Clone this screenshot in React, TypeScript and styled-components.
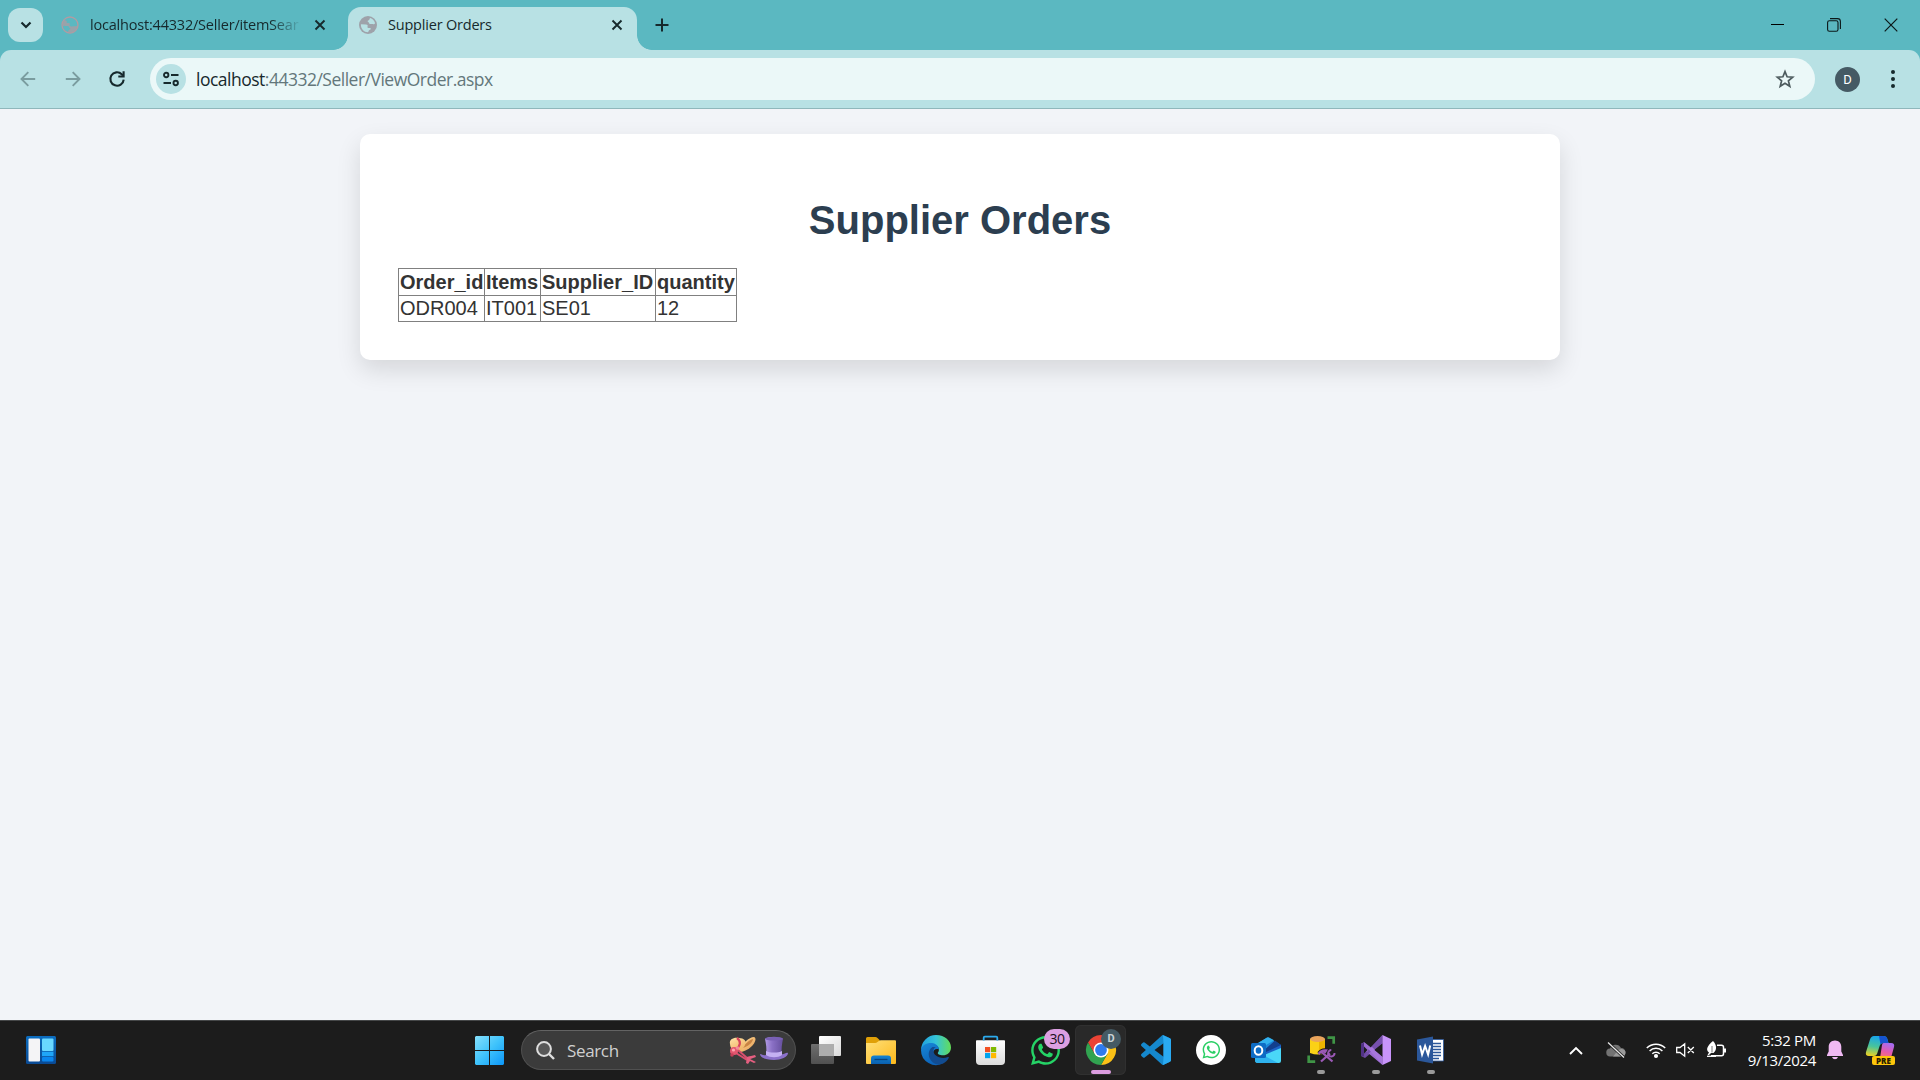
import React from "react";
import styled, { createGlobalStyle } from "styled-components";
import { FaWhatsapp } from "react-icons/fa";

const UI_FONT = `"Open Sans", "Noto Sans", sans-serif`;

const GlobalStyle = createGlobalStyle`
  * { box-sizing: border-box; }
  html, body { margin: 0; padding: 0; }
  body { width: 1920px; height: 1080px; overflow: hidden; background: #f2f4f8; }
  svg { display: block; overflow: visible; }
`;

const Desktop = styled.div`
  width: 1920px;
  height: 1080px;
  display: flex;
  flex-direction: column;
  font-family: ${UI_FONT};
`;

/* ---------- tab strip ---------- */
const TabStrip = styled.header`
  height: 50px;
  background: #5bb8c1;
  display: flex;
  align-items: flex-start;
  padding-left: 8px;
`;

const TabSearch = styled.button`
  width: 35px;
  height: 34px;
  margin-top: 8px;
  border: 0;
  padding: 0;
  border-radius: 12px;
  background: #b8e1e4;
  display: grid;
  place-items: center;
`;

const Tab = styled.div<{ $active?: boolean }>`
  position: relative;
  width: ${(p) => (p.$active ? 289 : 290)}px;
  height: ${(p) => (p.$active ? 43 : 36)}px;
  margin-top: 7px;
  margin-left: ${(p) => (p.$active ? 0 : 15)}px;
  padding: 0 0 ${(p) => (p.$active ? 7 : 0)}px ${(p) => (p.$active ? 11 : 3)}px;
  border-radius: 13px 13px 0 0;
  background: ${(p) => (p.$active ? "#b8e1e4" : "transparent")};
  display: flex;
  align-items: center;
`;

const TabFoot = styled.i<{ $side: "left" | "right" }>`
  position: absolute;
  bottom: 0;
  ${(p) => p.$side}: -15px;
  width: 15px;
  height: 15px;
  background: radial-gradient(
    circle at ${(p) => (p.$side === "left" ? "0 0" : "100% 0")},
    transparent 14.5px,
    #b8e1e4 15.2px
  );
`;

const TabTitle = styled.span<{ $fade?: boolean }>`
  width: ${(p) => (p.$fade ? 212 : 218)}px;
  flex: none;
  margin-left: 11px;
  white-space: nowrap;
  font-size: 14.5px;
  line-height: 22px;
  letter-spacing: ${(p) => (p.$fade ? "-0.2px" : "-0.2px")};
  color: #16292c;
  ${(p) => p.$fade && "mask-image: linear-gradient(90deg, #000 180px, transparent 212px);"}
`;

const TabClose = styled.span<{ $gap: number }>`
  margin-left: ${(p) => p.$gap}px;
`;

const NewTab = styled.div`
  margin: 18px 0 0 18px;
`;

const WindowControls = styled.div`
  margin-left: auto;
  height: 50px;
  padding: 0 22px 1px 0;
  display: flex;
  align-items: center;
  gap: 43px;
`;

/* ---------- toolbar ---------- */
const ToolbarBack = styled.div`
  background: #5bb8c1;
`;

const Toolbar = styled.div`
  height: 59px;
  border-radius: 11px 11px 0 0;
  border-bottom: 1px solid #8fb7bb;
  background: #b8e1e4;
  display: flex;
  align-items: center;
  padding: 0 20px 0 20px;
`;

const NavButtons = styled.div`
  width: 130px;
  display: flex;
  gap: 28.5px;
`;

const Omnibox = styled.div`
  width: 1665px;
  height: 42px;
  border-radius: 21px;
  background: #ebf8f8;
  display: flex;
  align-items: center;
  padding: 0 20px 0 6px;
`;

const SiteInfo = styled.span`
  width: 30px;
  height: 30px;
  border-radius: 50%;
  background: #b8e1e4;
  display: grid;
  place-items: center;
`;

const Url = styled.span`
  flex: 1;
  margin-left: 10px;
  font-size: 17.5px;
  line-height: 26px;
  letter-spacing: -0.5px;
  color: #63777b;
  b { font-weight: 400; color: #18292c; }
`;

const Avatar = styled.span`
  width: 25px;
  height: 25px;
  margin-left: 20px;
  border-radius: 50%;
  background: #455a64;
  color: #fff;
  font: 400 13px/25px Roboto, sans-serif;
  text-align: center;
`;

const Kebab = styled.span`
  margin-left: auto;
  margin-right: 4px;
`;

/* ---------- page ---------- */
const Page = styled.main`
  flex: 1;
  background: #f2f4f8;
  padding-top: 25px;
  font-family: "Liberation Sans", Arial, sans-serif;
  color: #333;
`;

const Card = styled.section`
  width: 1200px;
  height: 226px;
  margin: 0 auto;
  padding: 59px 38px 0;
  border-radius: 10px;
  background: #fff;
  box-shadow: 0 10px 25px rgba(0, 0, 0, 0.12);
`;

const Title = styled.h1`
  margin: 0 0 20px;
  height: 55px;
  font-size: 40px;
  line-height: 55px;
  text-align: center;
  color: #2c3e50;
`;

const OrdersTable = styled.table`
  table-layout: fixed;
  width: 339px;
  border-collapse: collapse;
  font-size: 20px;
  line-height: 23px;
  th, td {
    height: 26px;
    border: 1px solid #808080;
    padding: 1px;
    text-align: left;
    white-space: nowrap;
  }
  th { height: 27px; }
`;

/* ---------- taskbar ---------- */
const Taskbar = styled.footer`
  height: 60px;
  padding-bottom: 1px;
  background: #1c1c1c;
  border-top: 1px solid #454748;
  display: flex;
  align-items: center;
  color: #fff;
`;

const WidgetArea = styled.div`
  width: 462px;
  padding-left: 26px;
`;

const Slot = styled.div<{ $active?: boolean }>`
  position: relative;
  width: ${(p) => (p.$active ? 51 : 55)}px;
  margin: 0 ${(p) => (p.$active ? 2 : 0)}px;
  height: 50px;
  border-radius: 6px;
  background: ${(p) => (p.$active ? "#292929" : "none")};
  box-shadow: ${(p) => (p.$active ? "inset 0 0 0 1px #303030" : "none")};
  display: grid;
  place-items: center;
`;

const Running = styled.i<{ $wide?: boolean }>`
  position: absolute;
  bottom: 1px;
  left: 50%;
  transform: translateX(-50%);
  width: ${(p) => (p.$wide ? 20 : 8)}px;
  height: 4px;
  border-radius: 2px;
  background: ${(p) => (p.$wide ? "#dc9de0" : "#9a9a9a")};
`;

const CountBadge = styled.span`
  position: absolute;
  left: 26px;
  top: 4px;
  width: 26px;
  height: 20px;
  border-radius: 10px;
  background: #dc9fe2;
  color: #1b1020;
  font-size: 14px;
  line-height: 20px;
  letter-spacing: -0.5px;
  text-align: center;
`;

const ProfileBadge = styled.span`
  position: absolute;
  left: 26px;
  top: 4px;
  width: 20px;
  height: 20px;
  border-radius: 50%;
  background: #455a64;
  color: #c9d2d6;
  font: 700 11px/20px Roboto, sans-serif;
  text-align: center;
`;

const SearchBox = styled.div`
  width: 275px;
  height: 40px;
  margin: 0 2px 0 4px;
  border: 1px solid #505050;
  border-top-color: #636363;
  border-radius: 20px;
  background: #3b3b3b;
  display: flex;
  align-items: center;
  padding: 0 7px 0 14px;
`;

const SearchLabel = styled.span`
  flex: 1;
  margin-left: 12px;
  font-size: 17px;
  letter-spacing: -0.35px;
  color: #d0d0d0;
`;

const Tray = styled.div`
  margin-left: auto;
  padding-right: 25px;
  display: flex;
  align-items: center;
`;

const TrayItem = styled.span<{ $gap: number }>`
  margin-left: ${(p) => p.$gap}px;
`;

const Clock = styled.div`
  width: 84px;
  font-size: 15px;
  line-height: 20px;
  letter-spacing: -0.3px;
  text-align: right;
  white-space: nowrap;
`;

const CopilotWrap = styled.span`
  position: relative;
  margin-left: 23px;
`;

const PreTag = styled.span`
  position: absolute;
  left: 6px;
  top: 20px;
  width: 23px;
  height: 9px;
  border-radius: 2px;
  background: #fdc60b;
  color: #2a2000;
  font-size: 8px;
  font-weight: 800;
  line-height: 9px;
  text-align: center;
`;

/* ---------- icons ---------- */
const CloseGlyph = () => (
  <svg width="12" height="12" viewBox="0 0 12 12" stroke="#16292c" strokeWidth="1.9">
    <path d="M1.5 1.5l9 9M10.5 1.5l-9 9" />
  </svg>
);

const Globe = ({ muted }: { muted?: boolean }) => (
  <svg width="18" height="18" viewBox="0 0 18 18">
    {muted ? (
      <>
        <circle cx="9" cy="9" r="8" fill="none" stroke="#b39ba2" strokeWidth="1.3" />
        <path d="M1.500 8C1.500 4 5 1 9 1l2.200 1c-.9.700-.5 2-1.400 2.200-1 .1-1.700 1.100-.8 1.500 1.200.5.7 1.300 1.500 2 1 .7 2.100-.1 3.300.4 1 .5 1.900 0 2.300-.9.600 3 0 5-1.600 7l-1.500-1-1.500-.300c1.200-.200 1.400-1.700.2-1.900-1.300 0-2.500 0-2.800-1 1.200-.9.6-2.500-1.300-2.500z" fill="#a49fa6" opacity=".85" transform="rotate(180 9 9)" />
      </>
    ) : (
      <>
        <circle cx="9" cy="9" r="9" fill="#9ea2aa" />
        <path d="M11.200 2c2.500.8 4.300 2.700 4.900 5.200-.4.900-1.300 1.400-2.300.9-1.200-.5-2.300.3-3.300-.4-.8-.7-.3-1.500-1.500-2-.9-.4-.2-1.400.8-1.500.9-.2.500-1.500 1.400-2.200zM1.900 8.300l5 .1c1.900 0 2.500 1.600 1.300 2.500.3 1 1.500 1 2.800 1 1.200.2 1 1.700-.2 1.900-1.300.3-.9 1.800-1.800 2.500C5 16.300 1.700 12.800 1.900 8.300z" fill="#b8e1e4" />
      </>
    )}
  </svg>
);

const Widgets = () => (
  <svg width="30" height="28" viewBox="0 0 30 28">
    <defs>
      <linearGradient id="wb" x1="0" y1="0" x2="0" y2="1"><stop stopColor="#0b6dc0" /><stop offset="1" stopColor="#0a4a94" /></linearGradient>
    </defs>
    <rect width="30" height="28" rx="1.500" fill="url(#wb)" />
    <rect x="2.500" y="2.500" width="11.500" height="23" rx="1" fill="#f4f4f6" />
    <rect x="16" y="2.500" width="11.500" height="12.500" rx="1" fill="#69d8ff" />
    <rect x="16" y="15.700" width="11.500" height="4.500" fill="#1fa6f8" />
    <rect x="16" y="20.900" width="11.500" height="4.600" rx="1" fill="#0a86ee" />
  </svg>
);

const WindowsLogo = () => (
  <svg width="29" height="29" viewBox="0 0 29 29">
    <defs>
      <linearGradient id="win" gradientUnits="userSpaceOnUse" x1="0" y1="0" x2="29" y2="29"><stop stopColor="#86e0fc" /><stop offset=".5" stopColor="#3fc3fb" /><stop offset="1" stopColor="#0c96f8" /></linearGradient>
    </defs>
    <path d="M1 0h13v14H0V1zM15 0h13l1 1v13H15zM0 15h14v14H1l-1-1zM15 15h14v13l-1 1H15z" fill="url(#win)" />
  </svg>
);

const Hats = () => (
  <svg width="59" height="29" viewBox="0 0 59 29">
    <defs>
      <linearGradient id="straw" x1="0" y1="0" x2="1" y2="1"><stop stopColor="#ffdc9a" /><stop offset="1" stopColor="#e39a50" /></linearGradient>
      <linearGradient id="crown" x1="0" y1="0" x2=".6" y2="1"><stop stopColor="#ffe3a8" /><stop offset="1" stopColor="#f0b566" /></linearGradient>
      <linearGradient id="top" x1="0" x2="1"><stop stopColor="#b29be4" /><stop offset=".4" stopColor="#8a70c5" /><stop offset="1" stopColor="#66509f" /></linearGradient>
    </defs>
    <path d="M10 14C13 8 20 1 25 1c3 1 1 6-2 9-4 4-9 6-13 6z" fill="url(#straw)" />
    <path d="M13 12c3-4 7-8 11-9 0 3-5 8-11 9z" fill="#c98443" />
    <path d="M1 8C0 3 5 1 10 2c5 0 8 3 6 7-2 5-7 7-11 6-2-1-4-4-4-7z" fill="url(#crown)" />
    <path d="M8 2c4 3 4 7-1 12" fill="none" stroke="#d9445c" strokeWidth="2.200" />
    <path d="M7 17l11 7M9 14l9 8 6-1" fill="none" stroke="#d94f6e" strokeWidth="2" />
    <path d="M18 21l8-2 1 2-6 2 6 3-2 1-4-2-2 3-2-1z" fill="#e55f80" />
    <circle cx="5" cy="15" r="4" fill="#e4566f" /><circle cx="4.500" cy="14" r="1.600" fill="#ffa7b1" />
    <circle cx="8.500" cy="12" r="1.800" fill="#f58a9a" /><circle cx="3" cy="19" r="1.800" fill="#c33f58" />
    <path d="M31 18c2 0 3 2 6 1l15-1c3 1 5-2 7-1 0 4-7 7-14 7s-14-2-14-6z" fill="#8b70ca" />
    <path d="M36 3c3-3 15-3 18 0-1 5-2 10-1 15-3 3-13 3-16 0 1-5 0-10-1-15z" fill="url(#top)" />
    <path d="M37 15c4 2 12 2 16 0v4c-4 3-12 3-16 0z" fill="#c4b0f2" />
    <ellipse cx="45" cy="2.800" rx="9" ry="1.800" fill="#7960b4" />
  </svg>
);

const TaskView = () => (
  <svg width="30" height="30" viewBox="0 0 30 30">
    <defs>
      <linearGradient id="tv" x1="0" y1="0" x2="1" y2="1"><stop stopColor="#fff" /><stop offset="1" stopColor="#dadada" /></linearGradient>
      <linearGradient id="tg" x1="0" y1="0" x2="0" y2="1"><stop stopColor="#6f6f6f" /><stop offset="1" stopColor="#505050" /></linearGradient>
    </defs>
    <rect y="9" width="23" height="20" rx="1" fill="url(#tg)" />
    <rect x="8" y="1" width="22" height="20" rx="1" fill="url(#tv)" />
    <path d="M8 9h15v12H9l-1-1z" fill="#adadad" />
  </svg>
);

const Folder = () => (
  <svg width="30" height="30" viewBox="0 0 30 30">
    <defs>
      <linearGradient id="fo" x1="0" y1="0" x2="1" y2="1"><stop stopColor="#ffe07a" /><stop offset="1" stopColor="#fdb91b" /></linearGradient>
      <linearGradient id="fb" x1="0" y1="0" x2="0" y2="1"><stop stopColor="#1283d4" /><stop offset="1" stopColor="#0a5fae" /></linearGradient>
    </defs>
    <path d="M0 3.500Q0 2 1.500 2h8q1 0 2 1l2.300 2.300L12 9H0z" fill="#e0a008" />
    <path d="M0 8h9q1.500 0 2.500-1l1-.8q1-.9 2.500-.9h14q1 0 1 1V28q0 1-1 1H1q-1 0-1-1z" fill="url(#fo)" />
    <path d="M5 29v-5.500q0-3 3-3h14q3 0 3 3V29z" fill="url(#fb)" />
    <path d="M8.500 24.500h13" stroke="#06437f" strokeWidth="1.300" />
  </svg>
);

const Edge = () => (
  <svg width="30" height="30" viewBox="0 0 30 30">
    <defs>
      <linearGradient id="e1" x1="0" y1=".3" x2="1" y2=".3"><stop stopColor="#1f9fe0" /><stop offset=".5" stopColor="#35c4d8" /><stop offset="1" stopColor="#63dc58" /></linearGradient>
      <linearGradient id="e2" x1="0" y1="0" x2=".5" y2="1"><stop stopColor="#1788d8" /><stop offset="1" stopColor="#0c62b8" /></linearGradient>
    </defs>
    <path d="M0 15A15 15 0 0 1 15 0c9 0 15 6 15 12.500 0 5-4 7.800-8 7.800-3.500 0-6-1.300-5-2.800 2.500-3.500-.5-8-5-8-6 0-11 2.500-12 5.500z" fill="url(#e1)" />
    <path d="M0 15C1 10 6 7.500 11 8c4 .3 7 3.500 6.900 6.500-2.900-1.500-5.900.5-6 4.500 0 6 5.500 10 10.600 9A15 15 0 0 1 0 15z" fill="url(#e2)" />
    <path d="M11.500 12C7 15 6.500 21 10 25.500c3 4 8 5 12 3 2.500-1.300 4.500-3.300 5.700-5.600.4-.8-.2-1.200-.8-.9C20 25 11.500 20.500 12.500 15c.3-1.500 1-2.500 2.500-3z" fill="#124c91" />
  </svg>
);

const Store = () => (
  <svg width="30" height="30" viewBox="0 0 30 30">
    <defs><linearGradient id="st" x1="0" y1="0" x2="0" y2="1"><stop stopColor="#fff" /><stop offset="1" stopColor="#dcdcdc" /></linearGradient></defs>
    <path d="M0 6q0-.8.8-.8h27.400q.8 0 .8.800V26q0 4-4 4H4q-4 0-4-4z" fill="url(#st)" />
    <path d="M7.700 5.500V2.800Q7.700 1.700 8.800 1.700h11.400q1.100 0 1.100 1.100V5.500" fill="none" stroke="#2cabee" strokeWidth="1.800" />
    <path d="M9 12h5.200v5.200H9z" fill="#f25022" /><path d="M15 12h5.200v5.200H15z" fill="#7fba00" />
    <path d="M9 18h5.200v5.200H9z" fill="#00a4ef" /><path d="M15 18h5.200v5.200H15z" fill="#ffb900" />
  </svg>
);

const Chrome = () => (
  <svg width="30" height="30" viewBox="-15 -15 30 30">
    <path d="M0-7.500H13A15 15 0 0 0-13-7.500L-6.500 3.750z" fill="#ea4335" />
    <path d="M0-7.500H13A15 15 0 0 1 0 15L6.500 3.750z" fill="#fbc116" />
    <path d="M-6.500 3.750L-13-7.500A15 15 0 0 0 0 15L6.500 3.750z" fill="#31a350" />
    <circle r="7.500" fill="#fff" /><circle r="5.900" fill="#2f7bee" />
  </svg>
);

const VsCode = () => (
  <svg width="30" height="30" viewBox="0 0 24 24">
    <path fill="#1588cd" d="M23.150 2.587L18.210.210a1.494 1.494 0 0 0-1.705.290l-9.460 8.630-4.120-3.128a.999.999 0 0 0-1.276.057L.327 7.261A1 1 0 0 0 .326 8.740L3.899 12 .326 15.260a1 1 0 0 0 .001 1.479L1.650 17.940a.999.999 0 0 0 1.276.057l4.120-3.128 9.460 8.630a1.492 1.492 0 0 0 1.704.290l4.942-2.377A1.500 1.500 0 0 0 24 20.060V3.939a1.500 1.500 0 0 0-.850-1.352zm-5.146 14.861L10.826 12l7.178-5.448v10.896z" />
    <path fill="#2aaaf2" d="M17.600.200l5.550 2.387q.85.400.85 1.352V20.060q0 .95-.85 1.352L17.600 23.900l.404-6.400V6.500z" />
  </svg>
);

const WhatsAppRound = () => (
  <svg width="30" height="30" viewBox="0 0 30 30">
    <circle cx="15" cy="15" r="15" fill="#fff" />
    <FaWhatsapp x={5.300} y={4.700} size={20} color="#2bcf65" />
  </svg>
);

const Outlook = () => (
  <svg width="30" height="30" viewBox="0 0 30 30">
    <path d="M4 10L15.500 3q1.500-1 3 0L30 10v6L18 21 4 16z" fill="#1a86d9" />
    <path d="M7 8l9-5.500q1-.7 2 0l5 2.800L10 13z" fill="#31b1ee" />
    <path d="M12 16L24 5.500 30 10v2L15 20z" fill="#123f8e" />
    <path d="M14 17.500L30 10v6L18 22z" fill="#1c63c7" />
    <path d="M4 19l9 1L30 13v13q0 2-2 2H7q-3 0-3-3z" fill="#4ad7f8" />
    <path d="M4 19h6l17 9H7q-3 0-3-3z" fill="#2fb3ee" />
    <rect y="8" width="15" height="15" rx="1.500" fill="#0d6cc5" />
    <ellipse cx="7.500" cy="15.500" rx="3.800" ry="4.300" fill="none" stroke="#fff" strokeWidth="2" />
  </svg>
);

const SqlStudio = () => (
  <svg width="30" height="30" viewBox="0 0 30 30">
    <path d="M4 4h15v14q-7 3-15 0z" fill="#fbd116" />
    <path d="M13 4h6v14q-3 1.300-6 1.300z" fill="#eeb600" />
    <ellipse cx="11.500" cy="4" rx="7.500" ry="2.900" fill="#e9a45c" />
    <path d="M21.500 2.700h6.200v6M2.700 20.500v6.200h6.500" fill="none" stroke="#3f9546" strokeWidth="2.700" />
    <path d="M13 18.500q3-4 8-3l-2 3 8 8M15 26.500l9-8" fill="none" stroke="#1c1c1c" strokeWidth="4" />
    <path d="M12.500 19q3-4 7.500-3.500l-1.500 2.500M15.500 17l11 9.500M15 26.500l9-8" fill="none" stroke="#9b59b6" strokeWidth="2.300" />
    <path d="M28.500 18a3.200 3.200 0 1 1-3.200-2.900" fill="none" stroke="#9b59b6" strokeWidth="2" />
  </svg>
);

const VisualStudio = () => (
  <svg width="30" height="30" viewBox="0 0 30 30">
    <path d="M0 9l3-2 7 5.800L21.500 0v8.500L4 23l-4-2z" fill="#6c4aa0" />
    <path d="M0 9l3.500-1.500L21.500 22v8L3.500 15 2 20 0 21z" fill="#9b6bd0" />
    <path d="M0 9l3-1.500v14L0 21z" fill="#503285" />
    <path d="M3 21.500L21.500 8.500V0L8 14z" fill="#7650ad" />
    <path d="M7 13.500l4-1.500 10.500 10V30z" fill="#a676dc" />
    <path d="M3 11.500v7L6.500 15z" fill="#1c1c1c" />
    <path d="M21.500 8.500v13L13.500 15z" fill="#1c1c1c" />
    <path d="M21.500 0L30 4v22l-8.500 4z" fill="#c894fa" />
  </svg>
);

const Word = () => (
  <svg width="30" height="30" viewBox="0 0 30 30">
    <path d="M15 4.500h12.500V26H15z" fill="#fff" stroke="#2b579a" strokeWidth=".8" />
    <path d="M15 8.500h10M15 11.500h10M15 14.500h10M15 17.500h10M15 20.500h10M15 23.500h8" stroke="#2b579a" strokeWidth="1.400" />
    <path d="M1 4.500L17 1.500v27L1 25.500z" fill="#2b579a" />
    <path d="M4 10.500l2.100 9 3-8.500 3 8.500 2.100-9" fill="none" stroke="#fff" strokeWidth="2" />
  </svg>
);

const Copilot = () => (
  <svg width="29" height="29" viewBox="0 0 29 29">
    <defs>
      <linearGradient id="c1" x1=".3" y1="0" x2=".1" y2="1"><stop stopColor="#1aa7e8" /><stop offset=".5" stopColor="#49c49a" /><stop offset="1" stopColor="#f6d21c" /></linearGradient>
      <linearGradient id="c2" x1=".6" y1="0" x2=".3" y2="1"><stop stopColor="#a56cf0" /><stop offset=".5" stopColor="#e75aac" /><stop offset="1" stopColor="#fb8357" /></linearGradient>
    </defs>
    <path d="M8 0h10q2.500 0 3.200 2.500L22.500 7H17q-2.500 0-3.200 2.500L11 18q-.8 2-3 2H3q-4 0-3-4L4 3.500Q5 0 8 0z" fill="url(#c1)" />
    <path d="M13 0h5q2.500 0 3.200 2.500L22.500 7H17q-1.500 0-2.500 1.500z" fill="#1553cf" />
    <path d="M17.500 7H25q4 0 3 4l-2.500 9q-1 4-4 4H11q2.500 0 3.200-3L16 9q.4-2 1.500-2z" fill="url(#c2)" />
  </svg>
);

const apps: { name: string; icon: React.ReactNode; running?: boolean }[] = [
  { name: "vscode", icon: <VsCode /> },
  { name: "whatsapp-web", icon: <WhatsAppRound /> },
  { name: "outlook", icon: <Outlook /> },
  { name: "sql", icon: <SqlStudio />, running: true },
  { name: "vs", icon: <VisualStudio />, running: true },
  { name: "word", icon: <Word />, running: true },
];

export default function App() {
  return (
    <Desktop>
      <GlobalStyle />
      <TabStrip>
        <TabSearch>
          <svg width="12" height="8" viewBox="0 0 12 8" fill="none" stroke="#16292c" strokeWidth="2.200">
            <path d="M1.500 1.500L6 6l4.500-4.500" />
          </svg>
        </TabSearch>
        <Tab>
          <Globe muted />
          <TabTitle $fade>localhost:44332/Seller/itemSear</TabTitle>
          <TabClose $gap={12}><CloseGlyph /></TabClose>
        </Tab>
        <Tab $active>
          <TabFoot $side="left" />
          <Globe />
          <TabTitle>Supplier Orders</TabTitle>
          <TabClose $gap={5}><CloseGlyph /></TabClose>
          <TabFoot $side="right" />
        </Tab>
        <NewTab>
          <svg width="14" height="14" viewBox="0 0 14 14" stroke="#16292c" strokeWidth="2">
            <path d="M7 .5v13M.5 7h13" />
          </svg>
        </NewTab>
        <WindowControls>
          <svg width="13" height="13" viewBox="0 0 13 13"><path d="M0 6.500h13" stroke="#000" /></svg>
          <svg width="14" height="14" viewBox="0 0 14 14" fill="none" stroke="#0b1718" strokeWidth="1.100">
            <rect x=".6" y="2.800" width="10.400" height="10.400" rx="1.800" />
            <path d="M3 .6h7.500q2.900 0 2.900 2.900V11" />
          </svg>
          <svg width="14" height="14" viewBox="0 0 14 14" stroke="#0b1718" strokeWidth="1.200">
            <path d="M.7.700l12.600 12.600M13.300.700L.7 13.300" />
          </svg>
        </WindowControls>
      </TabStrip>

      <ToolbarBack>
        <Toolbar>
          <NavButtons>
            {[false, true].map((flip) => (
              <svg key={String(flip)} width="16" height="16" viewBox="0 0 16 16" fill="none" stroke="#7a9c9f" strokeWidth="1.900" transform={flip ? "scale(-1 1)" : undefined}>
                <path d="M15.200 8H1.800M8.300 1.200L1.500 8l6.800 6.800" />
              </svg>
            ))}
            <svg width="16" height="16" viewBox="0 0 16 16" fill="none" stroke="#16292c" strokeWidth="2.100">
              <path d="M14.700 8.600A6.700 6.700 0 1 1 12.700 3.200l1.300 1.300" />
              <path d="M14.600.300v5.200H9.300" />
            </svg>
          </NavButtons>
          <Omnibox>
            <SiteInfo>
              <svg width="16" height="16" viewBox="0 0 16 16" fill="none" stroke="#16292c" strokeWidth="1.900">
                <circle cx="3.200" cy="4" r="2.200" /><path d="M8 4h7.500M.5 12H8" /><circle cx="12.700" cy="12" r="2.200" />
              </svg>
            </SiteInfo>
            <Url><b>localhost</b>:44332/Seller/ViewOrder.aspx</Url>
            <svg width="20" height="20" viewBox="0 0 20 20" fill="none" stroke="#4d5b5e" strokeWidth="1.700">
              <path d="M10 2.600l2.100 5.200 5.600.4-4.300 3.600 1.400 5.500L10 14.300l-4.800 3 1.400-5.500-4.300-3.600 5.600-.4z" />
            </svg>
          </Omnibox>
          <Avatar>D</Avatar>
          <Kebab>
            <svg width="6" height="18" viewBox="0 0 6 18" fill="#16292c">
              <circle cx="3" cy="2" r="2" /><circle cx="3" cy="9" r="2" /><circle cx="3" cy="16" r="2" />
            </svg>
          </Kebab>
        </Toolbar>
      </ToolbarBack>

      <Page>
        <Card>
          <Title>Supplier Orders</Title>
          <OrdersTable>
            <colgroup>
              <col style={{ width: 86 }} /><col style={{ width: 56 }} /><col style={{ width: 115 }} /><col style={{ width: 81 }} />
            </colgroup>
            <tbody>
              <tr><th>Order_id</th><th>Items</th><th>Supplier_ID</th><th>quantity</th></tr>
              <tr><td>ODR004</td><td>IT001</td><td>SE01</td><td>12</td></tr>
            </tbody>
          </OrdersTable>
        </Card>
      </Page>

      <Taskbar>
        <WidgetArea><Widgets /></WidgetArea>
        <Slot><WindowsLogo /></Slot>
        <SearchBox>
          <svg width="19" height="19" viewBox="0 0 19 19" fill="#585858" stroke="#dedede" strokeWidth="2">
            <circle cx="8" cy="8" r="6.900" /><path d="M13 13l5 5" strokeWidth="2.400" />
          </svg>
          <SearchLabel>Search</SearchLabel>
          <Hats />
        </SearchBox>
        <Slot><TaskView /></Slot>
        <Slot><Folder /></Slot>
        <Slot><Edge /></Slot>
        <Slot><Store /></Slot>
        <Slot>
          <FaWhatsapp size={33} color="#25d366" />
          <CountBadge>30</CountBadge>
        </Slot>
        <Slot $active>
          <Chrome />
          <ProfileBadge>D</ProfileBadge>
          <Running $wide />
        </Slot>
        {apps.map((app) => (
          <Slot key={app.name}>
            {app.icon}
            {app.running && <Running />}
          </Slot>
        ))}
        <Tray>
          <svg width="14" height="9" viewBox="0 0 14 9" fill="none" stroke="#fff" strokeWidth="1.900">
            <path d="M1 8l6-6 6 6" />
          </svg>
          <TrayItem $gap={23}>
            <svg width="20" height="16" viewBox="0 0 20 16">
              <path d="M4.500 14.500a4 4 0 0 1-.5-8A6 6 0 0 1 15 6a4.300 4.300 0 0 1 1 8.500z" fill="#737373" />
              <path d="M7 14.500l5-6q2-2 4-1.500 4 1 3.500 4-.5 3.500-3.500 3.500z" fill="#9a9a9a" />
              <path d="M2 .5L18 15.500" stroke="#1c1c1c" strokeWidth="3" /><path d="M2 .5L18 15.500" stroke="#e8e8e8" strokeWidth="1.300" />
            </svg>
          </TrayItem>
          <TrayItem $gap={20}>
            <svg width="20" height="16" viewBox="0 0 20 16" fill="none" stroke="#fff" strokeWidth="1.500">
              <path d="M.8 6a13 13 0 0 1 18.400 0M3.600 9a9 9 0 0 1 12.800 0M6.300 11.800a5.200 5.200 0 0 1 7.400 0" /><circle cx="10" cy="14" r="1.300" fill="#fff" />
            </svg>
          </TrayItem>
          <TrayItem $gap={10}>
            <svg width="19" height="14" viewBox="0 0 19 14" fill="none" stroke="#fff" strokeWidth="1.300">
              <path d="M.7 4.500H4L8.700.800v12.400L4 9.500H.7zM11.800 4l6 6M17.800 4l-6 6" />
            </svg>
          </TrayItem>
          <TrayItem $gap={11}>
            <svg width="20" height="18" viewBox="0 0 20 18">
              <path d="M11 4.200h4.500q2 0 2 2v6.600q0 2-2 2H5" fill="none" stroke="#fff" strokeWidth="1.500" />
              <path d="M18 7.500h2v4h-2z" fill="#fff" />
              <path d="M7 0c4 4 4 9 .5 12H5L3 14H1.500L3 11.500C-.5 9 1 5 7 0z" fill="#fff" />
              <path d="M6 5v6.500" stroke="#777" /><path d="M1 15.300h9" stroke="#fff" strokeWidth="1.300" />
            </svg>
          </TrayItem>
          <TrayItem $gap={6}>
            <Clock>5:32 PM<br />9/13/2024</Clock>
          </TrayItem>
          <TrayItem $gap={11}>
            <svg width="16" height="20" viewBox="0 0 16 20" fill="#f0b9f3">
              <path d="M8 .5c3.800 0 6.300 2.800 6.300 6.300v4.700L16 15v1H0v-1l1.700-3.500V6.800C1.700 3.300 4.200.5 8 .5zM5 17h6q-.8 2.300-3 2.300T5 17z" />
            </svg>
          </TrayItem>
          <CopilotWrap>
            <Copilot />
            <PreTag>PRE</PreTag>
          </CopilotWrap>
        </Tray>
      </Taskbar>
    </Desktop>
  );
}
